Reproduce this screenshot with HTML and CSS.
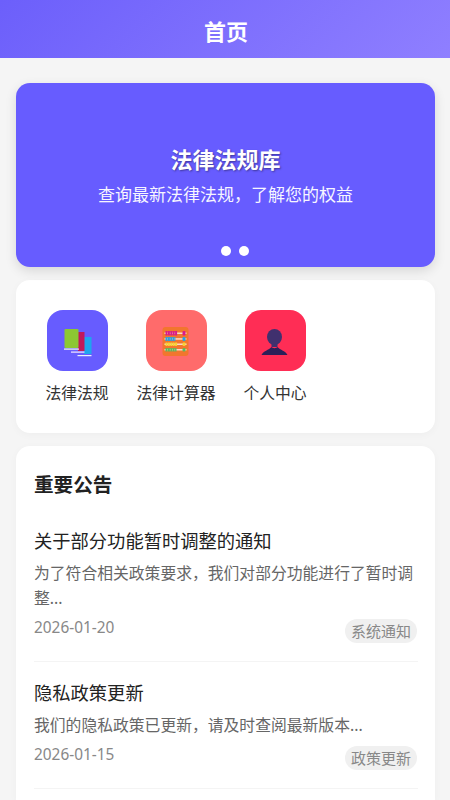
FILE: index.html
```html
<!DOCTYPE html>
<html lang="zh-CN">
<head>
<meta charset="utf-8">
<title>首页</title>
<link rel="stylesheet" href="styles.css">
</head>
<body>
<header class="topbar"><h1 class="topbar-title">首页</h1></header>
<main class="content">
  <section class="banner">
    <h2 class="banner-title">法律法规库</h2>
    <p class="banner-sub">查询最新法律法规，了解您的权益</p>
    <div class="dots"><span class="dot"></span><span class="dot"></span></div>
  </section>
  <section class="card menu">
    <a class="menu-item">
      <span class="menu-icon icon-blue">
        <svg viewBox="0 0 32 32" width="32" height="32">
          <rect x="23" y="12" width="7.500" height="17" fill="#1fa5ee"/>
          <rect x="16.500" y="30" width="14" height="1.200" fill="#e8f0ff"/>
          <rect x="17" y="7" width="6.500" height="19" fill="#c2185b"/>
          <rect x="10" y="26.500" width="13.500" height="1.200" fill="#f4e8ff"/>
          <rect x="3.500" y="4" width="14" height="19" rx="1" fill="#8cc832"/>
          <rect x="3" y="23.500" width="15" height="1.200" fill="#f2fbe8"/>
        </svg>
      </span>
      <span class="menu-label">法律法规</span>
    </a>
    <a class="menu-item">
      <span class="menu-icon icon-coral">
        <svg viewBox="0 0 32 32" width="32" height="32">
          <rect x="2.500" y="2" width="26" height="29" rx="3" fill="#f2762e"/>
          <rect x="4.500" y="7.500" width="22" height="1.500" fill="#fbd8c8"/>
          <rect x="4.500" y="13.200" width="22" height="1.500" fill="#fbd8c8"/>
          <rect x="4.500" y="18.500" width="22" height="1.500" fill="#fbd8c8"/>
          <rect x="4.500" y="24" width="22" height="1.500" fill="#fbd8c8"/>
          <path d="M5.500 8.250h12" stroke="#d81b8c" stroke-width="4.500" stroke-dasharray="2 .4" fill="none"/>
          <rect x="22.500" y="6" width="3" height="4.500" rx="1" fill="#d81b8c"/>
          <path d="M5.500 14h10" stroke="#2aa0e0" stroke-width="4" stroke-dasharray="2 .4" fill="none"/>
          <rect x="22.500" y="12" width="3" height="4" rx="1" fill="#2aa0e0"/>
          <path d="M5.500 19.250h12" stroke="#f7d233" stroke-width="3.500" stroke-dasharray="2 .4" fill="none"/>
          <rect x="22.500" y="17.500" width="3" height="3.500" rx="1" fill="#f7d233"/>
          <path d="M5.500 24.750h11" stroke="#5cb85c" stroke-width="3.500" stroke-dasharray="2 .4" fill="none"/>
          <rect x="22.500" y="23" width="3" height="3.500" rx="1" fill="#5cb85c"/>
        </svg>
      </span>
      <span class="menu-label">法律计算器</span>
    </a>
    <a class="menu-item">
      <span class="menu-icon icon-red">
        <svg viewBox="0 0 32 32" width="32" height="32">
          <ellipse cx="15.500" cy="12" rx="7.500" ry="8" fill="#40306e"/>
          <path d="M12.500 18h6v4h-6z" fill="#40306e"/>
          <path d="M2.500 30C4 26 10 25 12.500 22c1 1.500 5 1.500 6 0C21 25 27 26 28.500 30z" fill="#2c1f58"/>
        </svg>
      </span>
      <span class="menu-label">个人中心</span>
    </a>
  </section>
  <section class="card notices">
    <h2 class="notices-heading">重要公告</h2>
    <article class="notice">
      <h3 class="notice-title">关于部分功能暂时调整的通知</h3>
      <p class="notice-desc">为了符合相关政策要求，我们对部分功能进行了暂时调整...</p>
      <div class="notice-meta"><time class="notice-date">2026-01-20</time><span class="tag">系统通知</span></div>
    </article>
    <article class="notice">
      <h3 class="notice-title">隐私政策更新</h3>
      <p class="notice-desc">我们的隐私政策已更新，请及时查阅最新版本...</p>
      <div class="notice-meta"><time class="notice-date">2026-01-15</time><span class="tag">政策更新</span></div>
    </article>
  </section>
</main>
</body>
</html>
```
FILE: styles.css
```css
* { box-sizing: border-box; }
html, body { margin: 0; padding: 0; height: 800px; overflow: hidden; }
body {
  background: #f5f5f5;
  font-family: "Noto Sans", "Noto Sans CJK SC", sans-serif;
  color: #222;
}
.topbar {
  height: 58px;
  background: linear-gradient(135deg, #6c5ffb 0%, #8f7fff 100%);
  display: flex;
  align-items: center;
  justify-content: center;
  padding: 3px 0 0 2px;
}
.topbar-title {
  margin: 0;
  font-size: 22px;
  font-weight: 700;
  color: #fff;
  line-height: 30px;
}
.content {
  padding: 25px 15px 0 16px;
  display: flex;
  flex-direction: column;
  gap: 13px;
}
.banner {
  height: 184px;
  flex: none;
  border-radius: 14px;
  background: #675cff;
  box-shadow: 0 4px 12px rgba(0, 0, 0, 0.12);
  color: #fff;
  display: flex;
  flex-direction: column;
  align-items: center;
  padding-top: 60px;
  position: relative;
}
.banner-title {
  margin: 0;
  font-size: 22px;
  font-weight: 700;
  line-height: 32px;
  text-shadow: 1px 1px 2px rgba(0, 0, 0, 0.4);
}
.banner-sub {
  margin: 8px 0 0;
  font-size: 17px;
  line-height: 24px;
  opacity: 0.95;
}
.dots {
  position: absolute;
  bottom: 11px;
  left: 0;
  right: 0;
  display: flex;
  justify-content: center;
  gap: 8px;
  padding-left: 19px;
}
.dot { width: 10px; height: 10px; border-radius: 50%; background: #fff; }
.card {
  background: #fff;
  border-radius: 14px;
  box-shadow: 0 2px 8px rgba(0, 0, 0, 0.03);
}
.menu {
  height: 153px;
  flex: none;
  padding: 30px 16px 0 22px;
  display: flex;
  gap: 21px;
}
.menu-item {
  display: flex;
  flex-direction: column;
  align-items: center;
  gap: 10px;
  width: 78px;
}
.menu-icon {
  width: 61px;
  height: 61px;
  border-radius: 16px;
  display: flex;
  align-items: center;
  justify-content: center;
}
.icon-blue { background: #675cff; }
.icon-coral { background: #ff6b6b; }
.icon-red { background: #ff2d55; }
.menu-label {
  font-size: 15.800px;
  line-height: 24px;
  color: #333;
  white-space: nowrap;
}
.notices {
  padding: 24px 17px 0 18px;
  height: 354px;
  flex: none;
  border-radius: 14px 14px 0 0;
}
.notices-heading {
  margin: 0 0 18px;
  font-size: 19.600px;
  font-weight: 700;
  line-height: 30px;
  color: #222;
}
.notice {
  padding: 10px 0 17.500px;
  border-bottom: 1px solid #f4f4f4;
  margin-bottom: 8px;
}
.notice-title {
  margin: 0 0 7px;
  font-size: 18.300px;
  font-weight: 400;
  line-height: 26px;
  color: #222;
}
.notice-desc {
  margin: 0;
  font-size: 15.800px;
  line-height: 24.500px;
  color: #666;
}
.notice-meta {
  display: flex;
  justify-content: space-between;
  align-items: flex-start;
  margin-top: 8px;
}
.notice-date { font-size: 15.400px; line-height: 20px; color: #888; }
.tag {
  font-size: 15px;
  line-height: 24px;
  padding: 0 6px;
  border-radius: 12px;
  background: #f0f0f0;
  color: #888;
  margin: 1px 1px 0 0;
}
```
